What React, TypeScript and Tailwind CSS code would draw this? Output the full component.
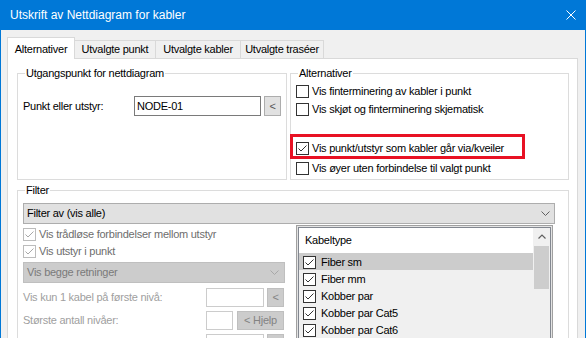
import React from "react";

const font = "font-['Liberation_Sans',Arial,sans-serif]";

interface CheckProps {
  checked?: boolean;
  disabled?: boolean;
}

function Check({ checked = false, disabled = false }: CheckProps) {
  return (
    <span
      className={`flex h-[13px] w-[13px] shrink-0 items-center justify-center border bg-white ${
        disabled ? "border-[#bcbcbc]" : "border-[#333333]"
      }`}
    >
      {checked && (
        <svg width="11" height="11" viewBox="0 0 11 11">
          <path
            d="M1.5 5.5 L4 8 L9.5 2.5"
            fill="none"
            stroke={disabled ? "#a8a8a8" : "#333333"}
            strokeWidth="1"
          />
        </svg>
      )}
    </span>
  );
}

function Chevron({ color = "#606060" }: { color?: string }) {
  return (
    <svg width="9" height="5" viewBox="0 0 9 5">
      <path d="M0.5 0.5 L4.5 4.5 L8.5 0.5" fill="none" stroke={color} strokeWidth="1" />
    </svg>
  );
}

const tabs = [
  { name: "Utvalgte punkt", w: "w-[81px]" },
  { name: "Utvalgte kabler", w: "w-[85px]" },
  { name: "Utvalgte traséer", w: "w-[83px]" },
];

const cableTypes = ["Fiber sm", "Fiber mm", "Kobber par", "Kobber par Cat5", "Kobber par Cat6"];

export default function App() {
  return (
    <div
      className={`flex h-[338px] w-[586px] flex-col overflow-hidden border-x border-[#0078d7] bg-[#f0f0f0] text-[11px] tracking-[-0.25px] text-black ${font}`}
    >
      {/* Title bar */}
      <div className="flex h-[30px] shrink-0 items-center justify-between bg-[#0078d7] px-[9px] text-[12px] tracking-normal text-white">
        <span>Utskrift av Nettdiagram for kabler</span>
        <svg width="10" height="10" viewBox="0 0 10 10">
          <path d="M0.5 0.5 L9.5 9.5 M9.5 0.5 L0.5 9.5" stroke="white" strokeWidth="1" />
        </svg>
      </div>

      {/* Tabs */}
      <div className="flex flex-1 flex-col pl-[6px] pt-[7px]">
        <div className="relative z-10 flex h-[21px] items-end">
          <div className="-mb-px flex h-[22px] w-[68px] items-center justify-center border-x border-t border-[#d9d9d9] bg-white pt-[1px]">
            Alternativer
          </div>
          {tabs.map((t) => (
            <div
              key={t.name}
              className={`flex h-[18px] ${t.w} items-center justify-center border-r border-t border-[#d9d9d9] bg-[#f0f0f0]`}
            >
              {t.name}
            </div>
          ))}
        </div>

        {/* Tab panel */}
        <div className="w-[571px] flex-1 border border-[#d9d9d9] bg-white pl-[9px] pt-[8px]">
          <div className="flex gap-[3px]">
            {/* Utgangspunkt */}
            <fieldset className="h-[113px] w-[270px] border border-[#dcdcdc]">
              <legend className="ml-[7px] px-[1px] leading-[13px]">Utgangspunkt for nettdiagram</legend>
              <div className="flex items-center pl-[5px] pt-[16px]">
                <span className="w-[111px]">Punkt eller utstyr:</span>
                <div className="flex h-[20px] w-[127px] items-center border border-[#7a7a7a] pl-[2px]">NODE-01</div>
                <button className="ml-[3px] flex h-[20px] w-[17px] items-center justify-center border border-[#adadad] bg-[#e1e1e1] text-[#555555]">
                  &lt;
                </button>
              </div>
            </fieldset>

            {/* Alternativer */}
            <fieldset className="h-[113px] w-[279px] border border-[#dcdcdc]">
              <legend className="ml-[7px] px-[1px] leading-[13px]">Alternativer</legend>
              <div className="flex flex-col pl-[5px] pt-[3px]">
                <label className="flex h-[17px] items-center gap-[3px]">
                  <Check />
                  <span>Vis finterminering av kabler i punkt</span>
                </label>
                <label className="mt-[1px] flex h-[17px] items-center gap-[3px]">
                  <Check />
                  <span>Vis skjøt og finterminering skjematisk</span>
                </label>
                <label className="relative mt-[22px] flex h-[17px] items-center gap-[3px]">
                  <Check checked />
                  <span>Vis punkt/utstyr som kabler går via/kveiler</span>
                  <span className="absolute -left-[6px] -top-[6px] h-[25px] w-[235px] border-[3px] border-[#e81123]" />
                </label>
                <label className="mt-[3px] flex h-[17px] items-center gap-[3px]">
                  <Check />
                  <span>Vis øyer uten forbindelse til valgt punkt</span>
                </label>
              </div>
            </fieldset>
          </div>

          {/* Filter */}
          <fieldset className="mt-[4px] h-[200px] w-[552px] border border-[#dcdcdc]">
            <legend className="ml-[7px] px-[1px] leading-[13px]">Filter</legend>
            <div className="pl-[5px] pt-[6px]">
              <div className="flex h-[21px] w-[532px] items-center justify-between border border-[#adadad] bg-[#e1e1e1] pl-[3px] pr-[4px]">
                <span>Filter av (vis alle)</span>
                <Chevron />
              </div>

              <div className="mt-[1px] flex">
                {/* Left column */}
                <div className="w-[262px] pt-[1px]">
                  <div className="flex h-[17px] items-center gap-[3px] text-[#6d6d6d]">
                    <Check checked disabled />
                    <span>Vis trådløse forbindelser mellom utstyr</span>
                  </div>
                  <div className="flex h-[17px] items-center gap-[3px] text-[#6d6d6d]">
                    <Check checked disabled />
                    <span>Vis utstyr i punkt</span>
                  </div>
                  <div className="mt-[2px] flex h-[21px] items-center justify-between border border-[#bfbfbf] bg-[#cccccc] pl-[3px] pr-[5px] text-[#7a7a7a]">
                    <span>Vis begge retninger</span>
                    <Chevron color="#a8a8a8" />
                  </div>
                  <div className="mt-[5px] flex items-center text-[#a0a0a0]">
                    <span className="w-[183px]">Vis kun 1 kabel på første nivå:</span>
                    <div className="h-[19px] w-[58px] border border-[#cccccc] bg-white" />
                    <button className="ml-[3px] flex h-[19px] w-[17px] items-center justify-center border border-[#bfbfbf] bg-[#cccccc] text-[#838383]">
                      &lt;
                    </button>
                  </div>
                  <div className="mt-[4px] flex items-center text-[#a0a0a0]">
                    <span className="w-[183px]">Største antall nivåer:</span>
                    <div className="h-[19px] w-[27px] border border-[#cccccc] bg-white" />
                    <button className="ml-[4px] flex h-[19px] w-[47px] items-center justify-center border border-[#bfbfbf] bg-[#cccccc] text-[#838383]">
                      &lt; Hjelp
                    </button>
                  </div>
                  <div className="mt-[4px] flex items-center pl-[183px]">
                    <div className="h-[19px] w-[58px] border border-[#cccccc] bg-white" />
                    <button className="ml-[3px] h-[19px] w-[17px] border border-[#bfbfbf] bg-[#cccccc]" />
                  </div>
                </div>

                {/* Kabeltype list */}
                <div className="ml-[11px] w-[257px] self-start border border-[#a0a0a0] bg-[#e3e3e3] p-[1px]">
                  <div className="flex border border-[#828790] bg-[#f0f0f0]">
                    <div className="w-[234px]">
                      <div className="flex h-[25px] items-center bg-white pl-[6px]">Kabeltype</div>
                      {cableTypes.map((c, i) => (
                        <div
                          key={c}
                          className={`flex h-[17px] items-center pl-[4px] pt-[1px] ${i === 0 ? "bg-[#cccccc]" : ""}`}
                        >
                          <Check checked />
                          <span className="ml-[5px]">{c}</span>
                        </div>
                      ))}
                    </div>
                    <div className="flex w-[17px] flex-col bg-[#f0f0f0]">
                      <div className="flex h-[17px] items-center justify-center">
                        <svg width="8" height="5" viewBox="0 0 8 5">
                          <path d="M0.5 4.5 L4 1 L7.5 4.5" fill="none" stroke="#606060" strokeWidth="1.2" />
                        </svg>
                      </div>
                      <div className="mx-[1px] mt-[1px] h-[43px] bg-[#cdcdcd]" />
                    </div>
                  </div>
                </div>
              </div>
            </div>
          </fieldset>
        </div>
      </div>
    </div>
  );
}
